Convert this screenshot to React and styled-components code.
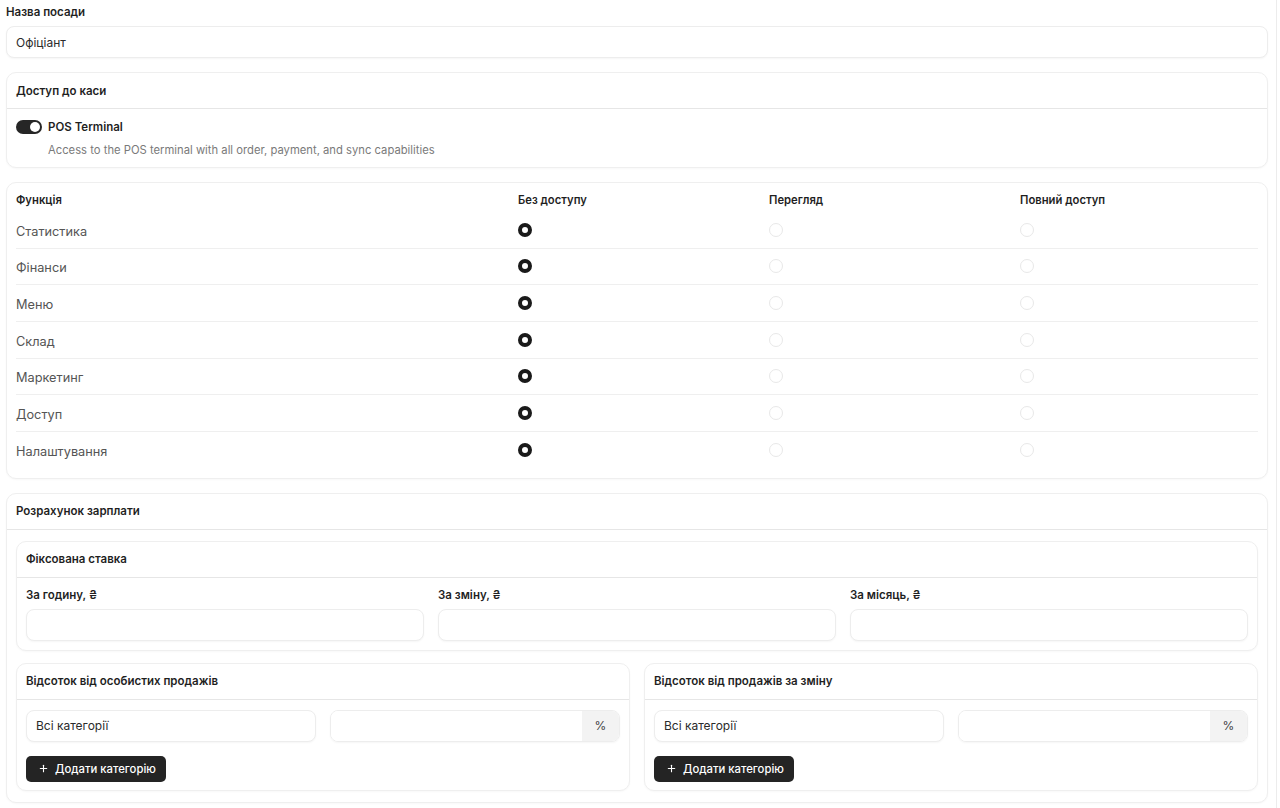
import React, { useState } from 'react';
import styled, { createGlobalStyle } from 'styled-components';
import { Plus } from 'lucide-react';

const GlobalStyle = createGlobalStyle`
  html, body {
    margin: 0;
    padding: 0;
    background: #fff;
  }
  body {
    font-family: Inter, "Noto Sans", "Liberation Sans", sans-serif;
    color: #1c1c1c;
    -webkit-font-smoothing: antialiased;
  }
  * { box-sizing: border-box; }
`;

const Page = styled.div`
  width: 1277px;
  min-height: 808px;
  border-right: 1px solid #ececec;
  padding: 4px 8px 6px 6px;
  display: flex;
  flex-direction: column;
`;

const FieldLabel = styled.div`
  font-size: 11.5px;
  line-height: 16px;
  font-weight: 600;
  color: #1f1f1f;
  margin-bottom: 6px;
`;

const TextInput = styled.input`
  display: block;
  width: 100%;
  height: 32px;
  border: 1px solid #ededed;
  border-radius: 8px;
  box-shadow: 0 1px 2px rgba(0, 0, 0, 0.04);
  padding: 0 9px;
  font: inherit;
  font-size: 12px;
  color: #2b2b2b;
  background: #fff;
  outline: none;
`;

const Card = styled.section`
  border: 1px solid #efefef;
  border-radius: 10px;
  box-shadow: 0 1px 2px rgba(0, 0, 0, 0.03);
  background: #fff;
  margin-top: ${({ top }) => top || 0}px;
  min-width: 0;
`;

const CardHeader = styled.div`
  height: 36px;
  display: flex;
  align-items: center;
  padding: 0 9px;
  border-bottom: 1px solid #e6e6e6;
  font-size: 11.5px;
  font-weight: 600;
  color: #1f1f1f;
`;

const CardBody = styled.div`
  padding: ${({ pad }) => pad || '10px 9px 9px'};
`;

const ToggleRow = styled.div`
  display: flex;
  align-items: center;
  gap: 6px;
  height: 16px;
  font-size: 11.5px;
  font-weight: 600;
  color: #1f1f1f;
`;

const Switch = styled.button`
  width: 26px;
  height: 14px;
  border-radius: 7px;
  border: none;
  padding: 0;
  background: ${({ on }) => (on ? '#262626' : '#d9d9d9')};
  position: relative;
  cursor: pointer;
  flex: none;

  &::after {
    content: '';
    position: absolute;
    top: 2px;
    left: ${({ on }) => (on ? '14px' : '2px')};
    width: 10px;
    height: 10px;
    border-radius: 50%;
    background: #fff;
  }
`;

const Hint = styled.div`
  margin: 7px 0 0 32px;
  font-size: 11.25px;
  line-height: 16px;
  color: #7a7a7a;
`;

const Table = styled.div`
  padding: 9px 9px 9px;
`;

const TableRow = styled.div`
  display: grid;
  grid-template-columns: 502px 251px 251px 1fr;
  align-items: center;
  height: ${({ head }) => (head ? '20px' : '36.67px')};
  border-bottom: ${({ last, head }) => (last || head ? 'none' : '1px solid #efefef')};
`;

const HeadCell = styled.div`
  font-size: 11.25px;
  font-weight: 600;
  color: #1f1f1f;
  padding-bottom: 4px;
`;

const RowLabel = styled.div`
  font-size: 12.75px;
  color: #555;
  padding-top: 3px;
`;

const Radio = styled.span`
  display: block;
  width: 14px;
  height: 14px;
  border-radius: 50%;
  border: ${({ checked }) => (checked ? '4px solid #1a1a1a' : '1px solid #e8e8e8')};
  background: #fff;
  cursor: pointer;
`;

const ThreeCols = styled.div`
  display: grid;
  grid-template-columns: repeat(3, 1fr);
  gap: 14px;
`;

const TwoCols = styled.div`
  display: grid;
  grid-template-columns: 1fr 1fr;
  gap: 14px;
  margin-top: ${({ top }) => top || 0}px;
`;

const InputGroup = styled.div`
  display: flex;
  height: 32px;
  border: 1px solid #ededed;
  border-radius: 8px;
  box-shadow: 0 1px 2px rgba(0, 0, 0, 0.04);
  overflow: hidden;
`;

const BareInput = styled.input`
  flex: 1;
  min-width: 0;
  border: none;
  outline: none;
  padding: 0 9px;
  font: inherit;
  font-size: 12px;
  background: #fff;
`;

const Addon = styled.span`
  width: 37px;
  display: flex;
  align-items: center;
  justify-content: center;
  background: #f3f3f3;
  font-size: 12px;
  color: #444;
`;

const Button = styled.button`
  display: inline-flex;
  align-items: center;
  gap: 6px;
  height: 26px;
  margin-top: 14px;
  padding: 0 10px 0 12px;
  border: none;
  border-radius: 5px;
  background: #242424;
  color: #fff;
  font: inherit;
  font-size: 11.3px;
  font-weight: 500;
  cursor: pointer;
`;

const functions = ['Статистика', 'Фінанси', 'Меню', 'Склад', 'Маркетинг', 'Доступ', 'Налаштування'];
const levels = ['none', 'view', 'full'];

const PercentCard = ({ title }) => (
  <Card>
    <CardHeader>{title}</CardHeader>
    <CardBody pad="10px 9px 8px">
      <TwoCols>
        <TextInput defaultValue="Всі категорії" />
        <InputGroup>
          <BareInput />
          <Addon>%</Addon>
        </InputGroup>
      </TwoCols>
      <Button>
        <Plus size={11} strokeWidth={2.4} />
        Додати категорію
      </Button>
    </CardBody>
  </Card>
);

export default function App() {
  const [pos, setPos] = useState(true);
  const [access, setAccess] = useState(() =>
    Object.fromEntries(functions.map((f) => [f, 'none']))
  );

  return (
    <>
      <GlobalStyle />
      <Page>
        <FieldLabel>Назва посади</FieldLabel>
        <TextInput defaultValue="Офіціант" />

        <Card top={14}>
          <CardHeader>Доступ до каси</CardHeader>
          <CardBody>
            <ToggleRow>
              <Switch on={pos} onClick={() => setPos(!pos)} />
              POS Terminal
            </ToggleRow>
            <Hint>Access to the POS terminal with all order, payment, and sync capabilities</Hint>
          </CardBody>
        </Card>

        <Card top={14}>
          <Table>
            <TableRow head>
              <HeadCell>Функція</HeadCell>
              <HeadCell>Без доступу</HeadCell>
              <HeadCell>Перегляд</HeadCell>
              <HeadCell>Повний доступ</HeadCell>
            </TableRow>
            {functions.map((f, i) => (
              <TableRow key={f} last={i === functions.length - 1}>
                <RowLabel>{f}</RowLabel>
                {levels.map((l) => (
                  <div key={l}>
                    <Radio
                      checked={access[f] === l}
                      onClick={() => setAccess({ ...access, [f]: l })}
                    />
                  </div>
                ))}
              </TableRow>
            ))}
          </Table>
        </Card>

        <Card top={14}>
          <CardHeader>Розрахунок зарплати</CardHeader>
          <CardBody pad="11px 9px 11px">
            <Card>
              <CardHeader>Фіксована ставка</CardHeader>
              <CardBody pad="9px 9px 9px">
                <ThreeCols>
                  <div>
                    <FieldLabel>За годину, ₴</FieldLabel>
                    <TextInput />
                  </div>
                  <div>
                    <FieldLabel>За зміну, ₴</FieldLabel>
                    <TextInput />
                  </div>
                  <div>
                    <FieldLabel>За місяць, ₴</FieldLabel>
                    <TextInput />
                  </div>
                </ThreeCols>
              </CardBody>
            </Card>
            <TwoCols top={12}>
              <PercentCard title="Відсоток від особистих продажів" />
              <PercentCard title="Відсоток від продажів за зміну" />
            </TwoCols>
          </CardBody>
        </Card>
      </Page>
    </>
  );
}
